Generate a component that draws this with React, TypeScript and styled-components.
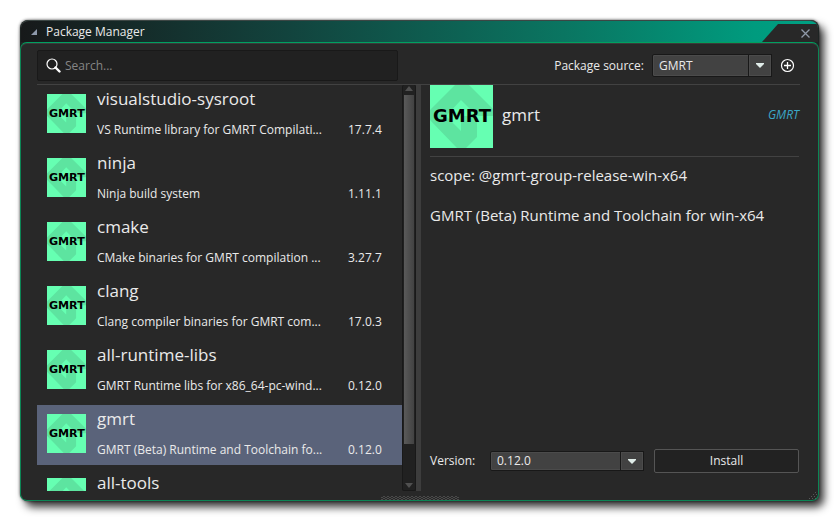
import React, { useState } from "react";
import styled, { createGlobalStyle } from "styled-components";

const GlobalStyle = createGlobalStyle`
  *, *::before, *::after { box-sizing: border-box; }
  body {
    margin: 0;
    background: #ffffff;
    font-family: "Open Sans", "Noto Sans", sans-serif;
    font-size: 12px;
    line-height: 16px;
    color: #eaeaea;
  }
  button, input, select { font: inherit; color: inherit; }
`;

const Desktop = styled.div`
  display: flex;
  height: 100vh;
  padding: 20px 20px 26px;
`;

const Window = styled.main`
  flex: 1;
  min-width: 0;
  display: flex;
  flex-direction: column;
  border-radius: 8px;
  background: #1e2423;
  box-shadow: 5px 6px 9px rgba(0, 0, 0, 0.8), 0 0 3px rgba(0, 0, 0, 0.7);
`;

const TitleBar = styled.header`
  display: flex;
  align-items: center;
  flex: none;
  height: 22px;
  margin: 0 1px;
  padding-left: 10px;
  border-top: 1px solid #3c4644;
  border-radius: 8px 8px 0 0;
  overflow: hidden;
  background: linear-gradient(90deg, #17191a 0%, #12443e 34%, #0a7561 68%, #009b7e 92%, #00a083 100%);
`;

const Title = styled.h1`
  flex: 1;
  margin: 0 0 0 9px;
  font-size: 12px;
  line-height: 16px;
  font-weight: 400;
`;

const CloseButton = styled.button`
  align-self: flex-end;
  display: flex;
  align-items: center;
  justify-content: flex-end;
  width: 56px;
  height: 18px;
  padding: 0 8px 0 0;
  border: 0;
  background: #282828;
  clip-path: polygon(0 100%, 16px 0, 100% 0, 100% 100%);
`;

const Panel = styled.div`
  position: relative;
  flex: 1;
  min-height: 0;
  display: flex;
  flex-direction: column;
  padding: 7px 18px 9px 16px;
  border: 1px solid #0c8555;
  border-top-color: #00a060;
  border-radius: 7px;
  background: #282828;
  box-shadow: inset 0 1px 0 #3b3b3b;
`;

const Toolbar = styled.div`
  display: flex;
  align-items: center;
  justify-content: space-between;
  flex: none;
  height: 35px;
  padding-bottom: 3px;
  border-bottom: 1px solid #424242;
`;

const SearchBox = styled.label`
  display: flex;
  align-items: center;
  gap: 4px;
  width: calc(50% - 21px);
  height: 31px;
  padding: 0 8px;
  border: 1px solid #191919;
  border-radius: 2px;
  background: #212121;
`;

const SearchInput = styled.input`
  flex: 1;
  min-width: 0;
  padding: 0;
  border: 0;
  outline: 0;
  background: transparent;
  &::placeholder { color: #858585; opacity: 1; }
`;

const SourceGroup = styled.div`
  display: flex;
  align-items: center;
  gap: 8px;
  padding-right: 5px;
`;

const SelectFrame = styled.span<{ $width: number; $height: number }>`
  position: relative;
  display: flex;
  width: ${(p) => p.$width}px;
  height: ${(p) => p.$height}px;
`;

const Select = styled.select`
  appearance: none;
  width: 100%;
  padding: 0 28px 0 6px;
  border: 1px solid #181818;
  border-radius: 2px;
  background: #424242;
  box-shadow: inset 0 0 0 1px #4b4b4b;
  outline: 0;
`;

const SelectArrow = styled.span`
  position: absolute;
  inset: 1px 1px 1px auto;
  display: flex;
  align-items: center;
  justify-content: center;
  width: 22px;
  border: 1px solid #4b4b4b;
  outline: 1px solid #181818;
  background: #424242;
  pointer-events: none;
`;

const AddButton = styled.button`
  display: flex;
  padding: 0;
  border: 0;
  background: none;
`;

const Columns = styled.div`
  flex: 1;
  min-height: 0;
  display: grid;
  grid-template-columns: minmax(0, 1fr) 5px minmax(0, 1fr);
`;

const ListPane = styled.section`
  display: flex;
  min-height: 0;
`;

const PackageList = styled.ul`
  flex: 1;
  min-width: 0;
  height: 100%;
  margin: 0;
  padding: 0;
  overflow: hidden;
  list-style: none;
`;

const PackageRow = styled.button<{ $selected: boolean }>`
  display: grid;
  grid-template-columns: 39px minmax(0, 1fr) 54px;
  column-gap: 11px;
  width: 100%;
  height: 60px;
  margin-bottom: 4px;
  padding: 0 0 0 10px;
  border: 0;
  text-align: left;
  background: ${(p) => (p.$selected ? "#5a637a" : "transparent")};
`;

const RowLogo = styled.span`
  display: flex;
  align-self: start;
  height: 39px;
  margin-top: 9px;
`;

const RowText = styled.span`
  display: grid;
  grid-template-rows: 28px 32px;
  white-space: nowrap;
`;

const PackageName = styled.span`
  font-size: 17px;
  line-height: 28px;
`;

const SmallText = styled.span`
  align-self: end;
  line-height: 16px;
  padding-bottom: 7px;
`;

const ScrollBar = styled.div`
  display: flex;
  flex-direction: column;
  align-items: center;
  width: 14px;
  border: 1px solid #191919;
  border-top: 0;
  border-radius: 2px;
  background: #212121;
`;

const ScrollThumb = styled.div`
  flex: 349;
  width: 10px;
  background: linear-gradient(90deg, #5a5a5a, #424242);
`;

const ScrollRest = styled.div`
  flex: 38;
`;

const Splitter = styled.div`
  background: #3d3d3d;
`;

const Details = styled.section`
  display: flex;
  flex-direction: column;
  min-height: 0;
  padding: 0 0 18px 9px;
`;

const DetailsHeader = styled.div`
  display: flex;
  align-items: center;
  gap: 9px;
  height: 72px;
  padding-bottom: 9px;
  margin-right: 1px;
  border-bottom: 1px solid #424242;
`;

const DetailsName = styled.h2`
  flex: 1;
  margin: 0;
  padding-bottom: 2px;
  font-size: 17px;
  line-height: 24px;
  font-weight: 400;
`;

const SourceTag = styled.em`
  padding-bottom: 2px;
  color: #3ba7c6;
`;

const Description = styled.div`
  flex: 1;
  padding-top: 8px;
  font-size: 15px;
  line-height: 20px;
  p { margin: 0 0 20px; }
`;

const InstallBar = styled.div`
  display: flex;
  align-items: center;
  gap: 10px;
  margin-right: 1px;
`;

const VersionLabel = styled.label`
  flex: 1;
`;

const InstallButton = styled.button`
  width: 145px;
  height: 24px;
  padding: 0;
  border: 1px solid #555555;
  border-radius: 2px;
  background: #222222;
`;

const BottomGrip = styled.div`
  position: absolute;
  bottom: 0;
  left: 50%;
  width: 78px;
  height: 4px;
  margin-left: -39px;
  background: conic-gradient(#4a4a4a 25%, transparent 0 50%, #4a4a4a 0 75%, transparent 0) 0 0 / 4px 2px;
`;

const CornerGrip = styled.svg`
  position: absolute;
  right: 1px;
  bottom: 1px;
`;

function Logo({ size }: { size: number }) {
  return (
    <svg width={size} height={size} viewBox="0 0 63 63" aria-hidden="true">
      <rect width="63" height="63" fill="#66ffb2" />
      <path
        fill="#5de4a0"
        fillRule="evenodd"
        d="M25 0H39L63 24V31H47V52L36 63H27L0 35V25ZM31 15L16 31L31 46V31H47Z"
      />
      <text
        x="32"
        y="37"
        textAnchor="middle"
        fontFamily="'DejaVu Sans', sans-serif"
        fontWeight="700"
        fontSize="18"
        fill="#000000"
      >
        GMRT
      </text>
    </svg>
  );
}

function DownArrow() {
  return (
    <svg width="8" height="5" viewBox="0 0 8 5" aria-hidden="true">
      <path d="M0 0H8V1L4 5L0 1Z" fill="#dfece8" />
    </svg>
  );
}

const packages = [
  { name: "visualstudio-sysroot", text: "VS Runtime library for GMRT Compilati...", version: "17.7.4" },
  { name: "ninja", text: "Ninja build system", version: "1.11.1" },
  { name: "cmake", text: "CMake binaries for GMRT compilation ...", version: "3.27.7" },
  { name: "clang", text: "Clang compiler binaries for GMRT com...", version: "17.0.3" },
  { name: "all-runtime-libs", text: "GMRT Runtime libs for x86_64-pc-wind...", version: "0.12.0" },
  { name: "gmrt", text: "GMRT (Beta) Runtime and Toolchain fo...", version: "0.12.0" },
  { name: "all-tools", text: "", version: "" },
];

export default function App() {
  const [selected, setSelected] = useState("gmrt");
  return (
    <Desktop>
      <GlobalStyle />
      <Window>
        <TitleBar>
          <svg width="6" height="6" viewBox="0 0 6 6" aria-hidden="true">
            <path d="M6 0V6H0Z" fill="#8d99ab" />
          </svg>
          <Title>Package Manager</Title>
          <CloseButton aria-label="Close">
            <svg width="9" height="9" viewBox="0 0 9 9" aria-hidden="true">
              <path d="M0.5 0.5L8.5 8.5M8.5 0.5L0.5 8.5" stroke="#8f99a8" strokeWidth="1.3" />
            </svg>
          </CloseButton>
        </TitleBar>
        <Panel>
          <Toolbar>
            <SearchBox>
              <svg width="15" height="15" viewBox="0 0 15 15" fill="none" aria-hidden="true">
                <circle cx="6" cy="6" r="5" stroke="#ffffff" strokeWidth="1.2" />
                <path d="M9.5 9.5L13.5 13.5" stroke="#ffffff" strokeWidth="2.4" strokeLinecap="round" />
              </svg>
              <SearchInput type="text" placeholder="Search..." aria-label="Search" />
            </SearchBox>
            <SourceGroup>
              <label htmlFor="source">Package source:</label>
              <SelectFrame $width={120} $height={23}>
                <Select id="source">
                  <option>GMRT</option>
                </Select>
                <SelectArrow><DownArrow /></SelectArrow>
              </SelectFrame>
              <AddButton aria-label="Add package source">
                <svg width="15" height="15" viewBox="0 0 15 15" fill="none" aria-hidden="true">
                  <circle cx="7.5" cy="7.5" r="6" stroke="#ffffff" strokeWidth="1.2" />
                  <path d="M7.5 4V11M4 7.5H11" stroke="#ffffff" strokeWidth="1.3" />
                </svg>
              </AddButton>
            </SourceGroup>
          </Toolbar>
          <Columns>
            <ListPane>
              <PackageList>
                {packages.map((p) => (
                  <li key={p.name}>
                    <PackageRow $selected={p.name === selected} onClick={() => setSelected(p.name)}>
                      <RowLogo><Logo size={39} /></RowLogo>
                      <RowText>
                        <PackageName>{p.name}</PackageName>
                        <SmallText>{p.text}</SmallText>
                      </RowText>
                      <SmallText>{p.version}</SmallText>
                    </PackageRow>
                  </li>
                ))}
              </PackageList>
              <ScrollBar aria-hidden="true">
                <svg width="10" height="10" viewBox="0 0 10 10"><path d="M1 6L5 1L9 6Z" fill="#505050" /></svg>
                <ScrollThumb />
                <ScrollRest />
                <svg width="10" height="8" viewBox="0 0 10 8"><path d="M1 1H9L5 6Z" fill="#505050" /></svg>
              </ScrollBar>
            </ListPane>
            <Splitter />
            <Details>
              <DetailsHeader>
                <Logo size={63} />
                <DetailsName>gmrt</DetailsName>
                <SourceTag>GMRT</SourceTag>
              </DetailsHeader>
              <Description>
                <p>scope: @gmrt-group-release-win-x64</p>
                <p>GMRT (Beta) Runtime and Toolchain for win-x64</p>
              </Description>
              <InstallBar>
                <VersionLabel htmlFor="version">Version:</VersionLabel>
                <SelectFrame $width={154} $height={20}>
                  <Select id="version">
                    <option>0.12.0</option>
                  </Select>
                  <SelectArrow><DownArrow /></SelectArrow>
                </SelectFrame>
                <InstallButton>Install</InstallButton>
              </InstallBar>
            </Details>
          </Columns>
          <BottomGrip />
          <CornerGrip width="8" height="8" viewBox="0 0 8 8" aria-hidden="true">
            <path d="M0 8L8 0M3 8L8 3M6 8L8 6" stroke="#5a5a5a" strokeDasharray="1.4 1.4" />
          </CornerGrip>
        </Panel>
      </Window>
    </Desktop>
  );
}
